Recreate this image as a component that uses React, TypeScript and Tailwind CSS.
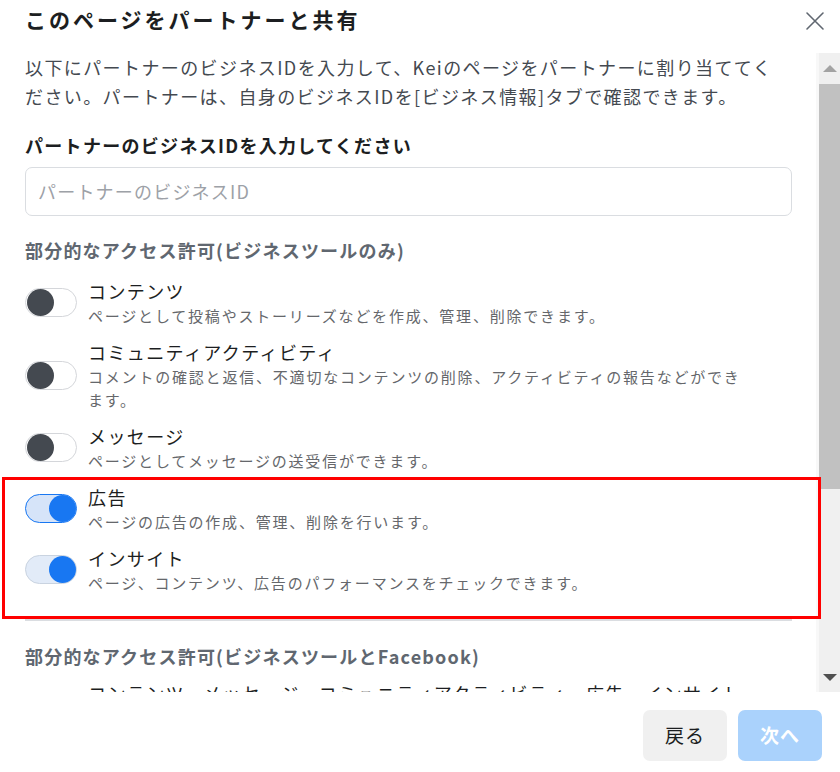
interface Perm {
  id: string;
  title: string;
  desc: string[];
  on: boolean;
  focused?: boolean;
}

const PERMS: Perm[] = [
  { id: "content", title: "コンテンツ", desc: ["ページとして投稿やストーリーズなどを作成、管理、削除できます。"], on: false },
  {
    id: "community",
    title: "コミュニティアクティビティ",
    desc: ["コメントの確認と返信、不適切なコンテンツの削除、アクティビティの報告などができ", "ます。"],
    on: false,
  },
  { id: "messages", title: "メッセージ", desc: ["ページとしてメッセージの送受信ができます。"], on: false },
  { id: "ads", title: "広告", desc: ["ページの広告の作成、管理、削除を行います。"], on: true, focused: true },
  { id: "insights", title: "インサイト", desc: ["ページ、コンテンツ、広告のパフォーマンスをチェックできます。"], on: true },
];

function Toggle({ on, focused }: { on: boolean; focused?: boolean }) {
  if (!on) {
    return (
      <div className="relative w-[52px] h-[29px] shrink-0 rounded-full border border-[#d4d6da] bg-white">
        <div className="absolute left-[1px] top-[0px] w-[27px] h-[27px] rounded-full bg-[#444950]" />
      </div>
    );
  }
  return (
    <div
      className={
        focused
          ? "relative w-[52px] h-[29px] shrink-0 rounded-full border-[1.5px] border-[#1877f2] bg-[#d6e4f9]"
          : "relative w-[52px] h-[29px] shrink-0 rounded-full border border-[#c9d3e0] bg-[#e2ebf8]"
      }
    >
      <div className="absolute right-[0px] top-[0px] w-[27px] h-[27px] rounded-full bg-[#1877f2]" />
    </div>
  );
}

function PermRow({ perm }: { perm: Perm }) {
  return (
    <div className="flex items-center gap-[11px]">
      <Toggle on={perm.on} focused={perm.focused} />
      <div className="min-w-0">
        <p className="text-[18px] leading-[26px] tracking-[1.4px] text-[#1c1e21]">{perm.title}</p>
        {perm.desc.map((line) => (
          <p key={line} className="text-[15px] leading-[23px] tracking-[1.8px] text-[#65676b] whitespace-nowrap">
            {line}
          </p>
        ))}
      </div>
    </div>
  );
}

export default function App() {
  return (
    <div
      className="relative w-[840px] h-[772px] bg-white overflow-hidden flex flex-col"
      style={{ fontFamily: '"Noto Sans CJK JP", "Noto Sans", sans-serif' }}
    >
      {/* header */}
      <div className="h-[53px] shrink-0 flex items-start justify-between pl-[25px] pr-[13px] pt-[3px]">
        <h1 className="text-[21px] leading-[32px] font-bold tracking-[3px] text-[#1c1e21]">このページをパートナーと共有</h1>
        <svg width="20" height="20" viewBox="0 0 20 20" className="mt-[8px] mr-[2px]" fill="none" stroke="#606770" strokeWidth="1.6" strokeLinecap="round">
          <path d="M2 2L18 18M18 2L2 18" />
        </svg>
      </div>

      {/* scroll area */}
      <div className="h-[639px] shrink-0 flex">
        <div className="flex-1 overflow-hidden pl-[25px] pr-[24px]">
          <p className="text-[18px] leading-[29px] tracking-[1.4px] text-[#444950] whitespace-nowrap">
            以下にパートナーのビジネスIDを入力して、Keiのページをパートナーに割り当ててく
            <br />
            ださい。パートナーは、自身のビジネスIDを[ビジネス情報]タブで確認できます。
          </p>

          <p className="mt-[20px] text-[18px] leading-[28px] font-bold tracking-[1.3px] text-[#1c1e21]">
            パートナーのビジネスIDを入力してください
          </p>
          <div className="mt-[8px] h-[49px] rounded-[7px] border border-[#dadde1] flex items-center px-[12px]">
            <span className="text-[18px] tracking-[1.2px] text-[#9da1a7]">パートナーのビジネスID</span>
          </div>

          <p className="mt-[20px] text-[18px] leading-[28px] font-semibold tracking-[1.2px] text-[#606770]">
            部分的なアクセス許可(ビジネスツールのみ)
          </p>

          <div className="mt-[14px] flex flex-col gap-[12px]">
            {PERMS.map((p) => (
              <PermRow key={p.id} perm={p} />
            ))}
          </div>

          <div className="mt-[25px] h-[2px] bg-[#dadde1]" />

          <p className="mt-[21px] text-[18px] leading-[28px] font-semibold tracking-[1.2px] text-[#606770]">
            部分的なアクセス許可(ビジネスツールとFacebook)
          </p>
          <div className="mt-[8px] flex items-center gap-[11px]">
            <div className="w-[52px] h-[29px] shrink-0" />
            <p className="text-[18px] leading-[26px] tracking-[1.4px] text-[#1c1e21] whitespace-nowrap">
              コンテンツ、メッセージ、コミュニティアクティビティ、広告、インサイト
            </p>
          </div>
        </div>

        {/* scrollbar */}
        <div className="w-[24px] shrink-0 bg-[#f0f0f0] border-l-[3px] border-[#f8f8f8] flex flex-col items-center">
          <div className="h-[31px] flex items-center justify-center">
            <div className="w-0 h-0 border-l-[7px] border-r-[7px] border-b-[7px] border-l-transparent border-r-transparent border-b-[#a3a3a3]" />
          </div>
          <div className="w-full h-[405px] bg-[#c1c1c1]" />
          <div className="flex-1" />
          <div className="h-[30px] flex items-center justify-center">
            <div className="w-0 h-0 border-l-[7px] border-r-[7px] border-t-[7px] border-l-transparent border-r-transparent border-t-[#505050]" />
          </div>
        </div>
      </div>

      {/* footer */}
      <div className="flex-1 flex items-start justify-end gap-[11px] pr-[18px] pt-[18px]">
        <button type="button" className="w-[84px] h-[51px] rounded-[7px] bg-[#f0f0f0] text-[19px] tracking-[1px] text-[#1c1e21]">
          戻る
        </button>
        <button type="button" className="w-[84px] h-[51px] rounded-[7px] bg-[#aad2fc] text-[19px] font-bold tracking-[1px] text-white">
          次へ
        </button>
      </div>

      {/* red annotation frame */}
      <div className="absolute left-[2px] top-[477px] w-[819px] h-[142px] border-[3px] border-[#ff0000] pointer-events-none" />
    </div>
  );
}
